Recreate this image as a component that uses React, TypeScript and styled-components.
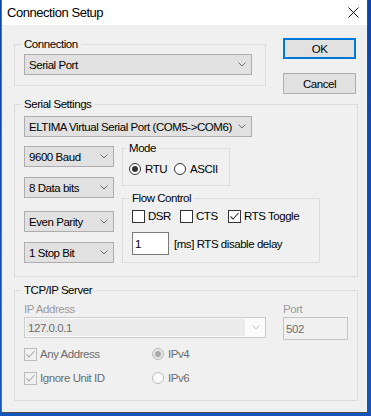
import React from 'react';
import styled, { createGlobalStyle } from 'styled-components';

const GlobalStyle = createGlobalStyle`
  html, body { margin: 0; padding: 0; }
  body {
    background: #0b4db3;
    font-family: "Liberation Sans", Arial, sans-serif;
    font-size: 11.5px;
    letter-spacing: -0.45px;
    color: #000;
  }
`;

const Desktop = styled.div`
  width: 371px;
  height: 416px;
  overflow: hidden;
  box-sizing: border-box;
  padding-left: 1px;
  background: linear-gradient(180deg, #0a47ac 0%, #1456bd 100%);
`;

const Window = styled.div`
  width: 367px;
  height: 413px;
  box-sizing: border-box;
  border-left: 1px solid #4a78bf;
  border-right: 1px solid #4d4d4d;
  border-bottom: 1px solid #4d4d4d;
  background: #f0f0f0;
  display: flex;
  flex-direction: column;
`;

const TitleBar = styled.div`
  height: 25px;
  flex: none;
  background: #ffffff;
  display: flex;
  align-items: center;
  justify-content: space-between;
  padding: 0 8px 0 5px;
`;

const Title = styled.span`
  font-family: "Liberation Sans", Arial, sans-serif;
  font-size: 13px;
  letter-spacing: -0.45px;
  color: #000;
`;

const Body = styled.div`
  padding: 12px 11px 0 12px;
  display: flex;
  flex-direction: column;
`;

const TopRow = styled.div`
  display: grid;
  grid-template-columns: 252px 73px;
  column-gap: 17px;
  align-items: start;
`;

const ButtonCol = styled.div`
  display: flex;
  flex-direction: column;
  gap: 14px;
  padding-top: 1px;
`;

const Button = styled.div<{ $primary?: boolean }>`
  width: 73px;
  height: 21px;
  box-sizing: border-box;
  background: #e1e1e1;
  border: ${p => (p.$primary ? '2px solid #0078d7' : '1px solid #adadad')};
  display: flex;
  align-items: center;
  justify-content: center;
`;

const Group = styled.fieldset<{ $w: number; $pad: string; $mt?: number }>`
  margin: ${p => p.$mt ?? 0}px 0 0 0;
  min-inline-size: 0;
  box-sizing: border-box;
  width: ${p => p.$w}px;
  border: 1px solid #dcdcdc;
  padding: ${p => p.$pad};
`;

const Legend = styled.legend`
  line-height: 14px;
  padding: 0 3px;
  margin-left: -3px;
`;

const Combo = styled.div<{ $w: number; $h?: number; $mt?: number }>`
  width: ${p => p.$w}px;
  height: ${p => p.$h ?? 21}px;
  margin-top: ${p => p.$mt ?? 0}px;
  box-sizing: border-box;
  background: #e1e1e1;
  border: 1px solid #adadad;
  display: flex;
  align-items: center;
  justify-content: space-between;
  padding: 0 5px 0 4px;
  white-space: nowrap;
`;

const DisabledCombo = styled.div<{ $w: number }>`
  width: ${p => p.$w}px;
  height: 21px;
  box-sizing: border-box;
  background: #fbfbfb;
  border: 1px solid #cccccc;
  display: flex;
  align-items: center;
  padding: 1px 5px 1px 1px;
  gap: 7px;
`;

const DisabledField = styled.div`
  flex: 1;
  align-self: stretch;
  background: #ebebeb;
  color: #6d6d6d;
  display: flex;
  align-items: center;
  padding-left: 2px;
`;

const Chevron = ({ disabled }: { disabled?: boolean }) => (
  <svg width="8" height="5" viewBox="0 0 8 5" style={{ flex: 'none' }}>
    <polyline
      points="0.5,0.5 4,4 7.5,0.5"
      fill="none"
      stroke={disabled ? '#c4c4c4' : '#707070'}
      strokeWidth="1"
    />
  </svg>
);

const Lower = styled.div`
  margin-top: 4px;
  display: grid;
  grid-template-columns: 90px 198px;
  column-gap: 8px;
  align-items: start;
`;

const LeftCol = styled.div`
  padding-top: 5px;
  display: flex;
  flex-direction: column;
`;

const RightCol = styled.div`
  display: flex;
  flex-direction: column;
  gap: 5px;
`;

const OptionRow = styled.div`
  display: flex;
  align-items: center;
  line-height: 14px;
  height: 14px;
`;

const Option = styled.label<{ $gap: number; $w?: number; $disabled?: boolean }>`
  display: flex;
  align-items: center;
  flex: none;
  width: ${p => (p.$w ? `${p.$w}px` : 'auto')};
  gap: ${p => p.$gap}px;
  line-height: 14px;
  white-space: nowrap;
  color: ${p => (p.$disabled ? '#6d6d6d' : '#000')};
`;

const RadioCircle = styled.span<{ $checked?: boolean; $disabled?: boolean; $bg?: string }>`
  width: 12px;
  height: 12px;
  box-sizing: border-box;
  border-radius: 50%;
  border: 1px solid ${p => (p.$disabled ? '#bcbcbc' : '#333333')};
  background: ${p => p.$bg ?? '#ffffff'};
  display: flex;
  align-items: center;
  justify-content: center;
  flex: none;
  &::after {
    content: '';
    display: ${p => (p.$checked ? 'block' : 'none')};
    width: 6px;
    height: 6px;
    border-radius: 50%;
    background: ${p => (p.$disabled ? '#a8a8a8' : '#333333')};
  }
`;

const CheckBox = styled.span<{ $disabled?: boolean }>`
  width: 13px;
  height: 13px;
  box-sizing: border-box;
  border: 1px solid ${p => (p.$disabled ? '#bcbcbc' : '#333333')};
  background: ${p => (p.$disabled ? '#f0f0f0' : '#ffffff')};
  display: flex;
  align-items: center;
  justify-content: center;
  flex: none;
`;

const CheckMark = ({ disabled }: { disabled?: boolean }) => (
  <svg width="11" height="11" viewBox="0 0 11 11">
    <polyline
      points="1.5,5.5 4,8 9.5,2"
      fill="none"
      stroke={disabled ? '#a8a8a8' : '#333333'}
      strokeWidth="1.1"
    />
  </svg>
);

const DelayRow = styled.div`
  margin-top: 9px;
  display: flex;
  align-items: center;
  gap: 5px;
`;

const TextBox = styled.div<{ $w: number; $disabled?: boolean }>`
  width: ${p => p.$w}px;
  height: 23px;
  box-sizing: border-box;
  border: 1px solid ${p => (p.$disabled ? '#c4c4c4' : '#7a7a7a')};
  background: ${p => (p.$disabled ? '#f0f0f0' : '#ffffff')};
  color: ${p => (p.$disabled ? '#6d6d6d' : '#000')};
  padding: 0 2px;
  display: flex;
  align-items: center;
`;

const TcpGrid = styled.div`
  display: grid;
  grid-template-columns: 242px 65px;
  column-gap: 17px;
  align-items: start;
`;

const FieldLabel = styled.div`
  line-height: 15px;
  height: 15px;
  color: #9a9a9a;
`;

const CheckGrid = styled.div`
  margin-top: 7px;
  display: grid;
  grid-template-columns: 128px auto;
  row-gap: 10px;
`;

const comboHeights = [
  { label: '9600 Baud', mt: 0 },
  { label: '8 Data bits', mt: 10 },
  { label: 'Even Parity', mt: 13 },
  { label: '1 Stop Bit', mt: 10 },
];

export default function App() {
  return (
    <>
      <GlobalStyle />
      <Desktop>
        <Window>
          <TitleBar>
            <Title>Connection Setup</Title>
            <svg width="11" height="11" viewBox="0 0 11 11">
              <path d="M0.5 0.5 L10.5 10.5 M10.5 0.5 L0.5 10.5" stroke="#111" strokeWidth="1" />
            </svg>
          </TitleBar>
          <Body>
            <TopRow>
              <Group $w={252} $pad="3px 13px 10px 9px">
                <Legend>Connection</Legend>
                <Combo $w={228}>
                  <span>Serial Port</span>
                  <Chevron />
                </Combo>
              </Group>
              <ButtonCol>
                <Button $primary>OK</Button>
                <Button>Cancel</Button>
              </ButtonCol>
            </TopRow>

            <Group $w={344} $pad="5px 0 13px 9px" $mt={3}>
              <Legend>Serial Settings</Legend>
              <Combo $w={228}>
                <span>ELTIMA Virtual Serial Port (COM5-&gt;COM6)</span>
                <Chevron />
              </Combo>
              <Lower>
                <LeftCol>
                  {comboHeights.map(c => (
                    <Combo key={c.label} $w={90} $mt={c.mt}>
                      <span>{c.label}</span>
                      <Chevron />
                    </Combo>
                  ))}
                </LeftCol>
                <RightCol>
                  <Group $w={108} $pad="7px 0 9px 6px">
                    <Legend>Mode</Legend>
                    <OptionRow>
                      <Option $gap={4} $w={45}>
                        <RadioCircle $checked />
                        RTU
                      </Option>
                      <Option $gap={4}>
                        <RadioCircle />
                        ASCII
                      </Option>
                    </OptionRow>
                  </Group>
                  <Group $w={198} $pad="4px 0 7px 9px">
                    <Legend>Flow Control</Legend>
                    <OptionRow>
                      <Option $gap={3} $w={48}>
                        <CheckBox />
                        DSR
                      </Option>
                      <Option $gap={3} $w={48}>
                        <CheckBox />
                        CTS
                      </Option>
                      <Option $gap={3}>
                        <CheckBox>
                          <CheckMark />
                        </CheckBox>
                        RTS Toggle
                      </Option>
                    </OptionRow>
                    <DelayRow>
                      <TextBox $w={37}>1</TextBox>
                      <span>[ms] RTS disable delay</span>
                    </DelayRow>
                  </Group>
                </RightCol>
              </Lower>
            </Group>

            <Group $w={344} $pad="5px 0 15px 9px" $mt={6}>
              <Legend>TCP/IP Server</Legend>
              <TcpGrid>
                <FieldLabel>IP Address</FieldLabel>
                <FieldLabel>Port</FieldLabel>
                <DisabledCombo $w={242}>
                  <DisabledField>127.0.0.1</DisabledField>
                  <Chevron disabled />
                </DisabledCombo>
                <TextBox $w={65} $disabled>
                  502
                </TextBox>
              </TcpGrid>
              <CheckGrid>
                <Option $gap={3} $disabled>
                  <CheckBox $disabled>
                    <CheckMark disabled />
                  </CheckBox>
                  Any Address
                </Option>
                <Option $gap={4} $disabled>
                  <RadioCircle $checked $disabled $bg="#e6e6e6" />
                  IPv4
                </Option>
                <Option $gap={3} $disabled>
                  <CheckBox $disabled>
                    <CheckMark disabled />
                  </CheckBox>
                  Ignore Unit ID
                </Option>
                <Option $gap={4} $disabled>
                  <RadioCircle $disabled $bg="#fafafa" />
                  IPv6
                </Option>
              </CheckGrid>
            </Group>
          </Body>
        </Window>
      </Desktop>
    </>
  );
}
